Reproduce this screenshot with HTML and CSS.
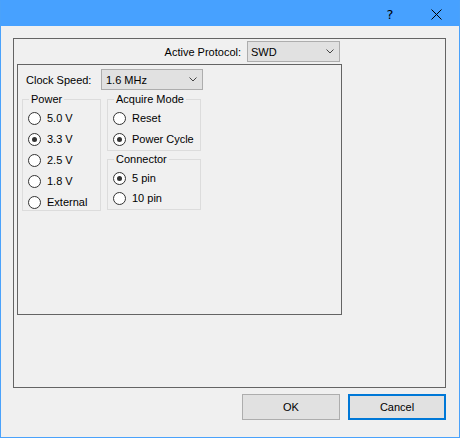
FILE: index.html
```html
<!DOCTYPE html>
<html>
<head>
<meta charset="utf-8">
<link rel="stylesheet" href="styles.css">
</head>
<body>
<div class="window">
  <div class="titlebar">
    <div class="tb-btn"><span class="help">?</span></div>
    <div class="tb-btn">
      <svg class="close" width="11" height="11" viewBox="0 0 11 11"><path d="M0.5 0.5 L10.5 10.5 M10.5 0.5 L0.5 10.5" stroke="#000" stroke-width="1" fill="none"/></svg>
    </div>
  </div>
  <div class="client">
    <div class="outer">
      <div class="protocol-row">
        <span class="lbl">Active Protocol:</span>
        <div class="combo combo-proto"><span>SWD</span>
          <svg class="chev" width="8" height="5" viewBox="0 0 8 5"><polyline points="0.5,0.5 4,4 7.5,0.5" stroke="#444" fill="none"/></svg>
        </div>
      </div>
      <div class="inner">
        <div class="clock-row">
          <span class="lbl clock-lbl">Clock Speed:</span>
          <div class="combo combo-clock"><span>1.6 MHz</span>
            <svg class="chev" width="8" height="5" viewBox="0 0 8 5"><polyline points="0.5,0.5 4,4 7.5,0.5" stroke="#444" fill="none"/></svg>
          </div>
        </div>
        <div class="groups">
          <div class="group power">
            <div class="glabel">Power</div>
            <div class="rows">
              <div class="row"><span class="radio"></span>5.0 V</div>
              <div class="row"><span class="radio on"></span>3.3 V</div>
              <div class="row"><span class="radio"></span>2.5 V</div>
              <div class="row"><span class="radio"></span>1.8 V</div>
              <div class="row"><span class="radio"></span>External</div>
            </div>
          </div>
          <div class="col">
            <div class="group acquire">
              <div class="glabel">Acquire Mode</div>
              <div class="rows">
                <div class="row"><span class="radio"></span>Reset</div>
                <div class="row"><span class="radio on"></span>Power Cycle</div>
              </div>
            </div>
            <div class="group connector">
              <div class="glabel">Connector</div>
              <div class="rows tight">
                <div class="row"><span class="radio on"></span>5 pin</div>
                <div class="row"><span class="radio"></span>10 pin</div>
              </div>
            </div>
          </div>
        </div>
      </div>
    </div>
    <div class="buttons">
      <button class="btn">OK</button>
      <button class="btn default">Cancel</button>
    </div>
  </div>
</div>
</body>
</html>
```
FILE: styles.css
```css
* { box-sizing: border-box; }
html, body { margin: 0; padding: 0; background: #f0f0f0; }
body {
  font-family: "Liberation Sans", Arial, sans-serif;
  font-size: 11px;
  color: #000;
}
.window {
  width: 460px;
  height: 438px;
  border: 1px solid #4aa2fb;
  border-top: 1px solid #47a1ff;
  background: #f0f0f0;
}
.titlebar {
  height: 25px;
  background: #47a1ff;
  display: flex;
  justify-content: flex-end;
}
.tb-btn {
  width: 46px;
  height: 25px;
  display: flex;
  align-items: center;
  justify-content: center;
}
.help {
  font-family: "DejaVu Sans", sans-serif;
  font-size: 13px;
  line-height: 13px;
  color: #000;
  margin-top: 1px;
}
.close { display: block; margin-top: 1px; }
.client {
  padding: 12px 13px 0 12px;
}
.outer {
  height: 350px;
  border: 1px solid #646464;
}
.protocol-row {
  width: 326px;
  height: 21px;
  margin-top: 2px;
  display: flex;
  align-items: center;
  justify-content: flex-end;
  gap: 6px;
}
.lbl { white-space: nowrap; }
.combo {
  height: 21px;
  background: #e1e1e1;
  border: 1px solid #adadad;
  display: flex;
  align-items: center;
  justify-content: space-between;
  padding: 0 5px 0 3px;
}
.chev { display: block; }
.combo-proto { width: 93px; }
.combo-clock { width: 102px; padding-left: 4px; }
.inner {
  width: 325px;
  height: 251px;
  margin: 2px 0 0 3px;
  border: 1px solid #646464;
}
.clock-row {
  display: flex;
  align-items: center;
  padding: 4px 0 0 8px;
}
.clock-lbl { width: 75px; }
.groups {
  display: flex;
  gap: 6px;
  margin-top: 9px;
  padding-left: 4px;
}
.col {
  display: flex;
  flex-direction: column;
  gap: 8px;
}
.group {
  border: 1px solid #dcdcdc;
}
.power { width: 79px; height: 112px; }
.acquire { width: 94px; height: 52px; }
.connector { width: 94px; height: 51px; }
.glabel {
  width: fit-content;
  margin: -7px 0 0 6px;
  padding: 0 2px;
  line-height: 13px;
  background: #f0f0f0;
  white-space: nowrap;
}
.rows {
  display: flex;
  flex-direction: column;
  gap: 5px;
  margin-top: 4px;
  padding-left: 5px;
}
.rows.tight { gap: 4px; }
.row {
  height: 16px;
  display: flex;
  align-items: center;
  gap: 6px;
  white-space: nowrap;
}
.radio {
  width: 13px;
  height: 13px;
  border: 1px solid #333;
  border-radius: 50%;
  background: #fff;
  display: flex;
  align-items: center;
  justify-content: center;
  flex: none;
}
.radio.on::after {
  content: "";
  width: 5px;
  height: 5px;
  border-radius: 50%;
  background: #333;
}
.buttons {
  display: flex;
  justify-content: flex-end;
  gap: 8px;
  margin-top: 6px;
}
.btn {
  width: 98px;
  height: 26px;
  background: #e1e1e1;
  border: 1px solid #adadad;
  font-family: "Liberation Sans", Arial, sans-serif;
  font-size: 11px;
  color: #000;
  padding: 0;
  margin: 0;
}
.btn.default {
  border: 2px solid #0078d7;
}
```
